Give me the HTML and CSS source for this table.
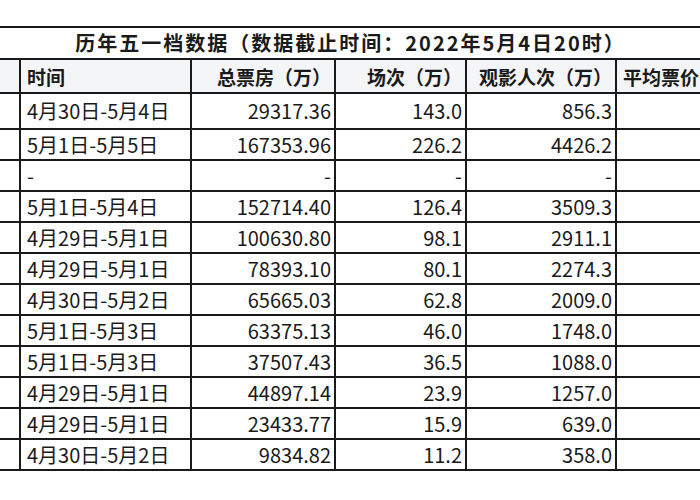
FILE: index.html
```html
<!DOCTYPE html>
<html lang="zh-CN">
<head>
<meta charset="utf-8">
<title>历年五一档数据</title>
<link rel="stylesheet" href="styles.css">
</head>
<body>
<div class="frame">
  <table class="sheet">
    <colgroup>
      <col class="c-idx">
      <col class="c-time">
      <col class="c-box">
      <col class="c-show">
      <col class="c-aud">
      <col class="c-price">
    </colgroup>
    <tr class="title-row">
      <td class="title" colspan="6">历年五一档数据（数据截止时间：2022年5月4日20时）</td>
    </tr>
    <tr class="head-row">
      <th></th>
      <th class="left">时间</th>
      <th>总票房（万）</th>
      <th>场次（万）</th>
      <th>观影人次（万）</th>
      <th class="left">平均票价（元）</th>
    </tr>
    <tr class="first"><td></td><td class="left">4月30日-5月4日</td><td>29317.36</td><td>143.0</td><td>856.3</td><td></td></tr>
    <tr><td></td><td class="left">5月1日-5月5日</td><td>167353.96</td><td>226.2</td><td>4426.2</td><td></td></tr>
    <tr><td></td><td class="left">-</td><td>-</td><td>-</td><td>-</td><td></td></tr>
    <tr><td></td><td class="left">5月1日-5月4日</td><td>152714.40</td><td>126.4</td><td>3509.3</td><td></td></tr>
    <tr><td></td><td class="left">4月29日-5月1日</td><td>100630.80</td><td>98.1</td><td>2911.1</td><td></td></tr>
    <tr><td></td><td class="left">4月29日-5月1日</td><td>78393.10</td><td>80.1</td><td>2274.3</td><td></td></tr>
    <tr><td></td><td class="left">4月30日-5月2日</td><td>65665.03</td><td>62.8</td><td>2009.0</td><td></td></tr>
    <tr><td></td><td class="left">5月1日-5月3日</td><td>63375.13</td><td>46.0</td><td>1748.0</td><td></td></tr>
    <tr><td></td><td class="left">5月1日-5月3日</td><td>37507.43</td><td>36.5</td><td>1088.0</td><td></td></tr>
    <tr><td></td><td class="left">4月29日-5月1日</td><td>44897.14</td><td>23.9</td><td>1257.0</td><td></td></tr>
    <tr><td></td><td class="left">4月29日-5月1日</td><td>23433.77</td><td>15.9</td><td>639.0</td><td></td></tr>
    <tr><td></td><td class="left">4月30日-5月2日</td><td>9834.82</td><td>11.2</td><td>358.0</td><td></td></tr>
  </table>
</div>
</body>
</html>
```
FILE: styles.css
```css
html, body {
  margin: 0;
  padding: 0;
  background: #ffffff;
}

.frame {
  width: 700px;
  height: 500px;
  overflow: hidden;
  padding-top: 26px;
  box-sizing: border-box;
}

.sheet {
  margin-left: -40px;
  width: 776px;
  table-layout: fixed;
  border-collapse: collapse;
  font-family: "Noto Sans CJK SC", "Noto Sans", sans-serif;
  font-size: 20px;
  color: #1a1a1a;
}

.c-idx { width: 59px; }
.c-time { width: 171px; }
.c-box { width: 144px; }
.c-show { width: 131px; }
.c-aud { width: 150px; }
.c-price { width: 121px; }

.sheet td,
.sheet th {
  border: 2px solid #1a1a1a;
  padding: 0 3px 0 6px;
  text-align: right;
  white-space: nowrap;
  overflow: hidden;
  line-height: 1;
  height: 31px;
  box-sizing: border-box;
}

.sheet .left {
  text-align: left;
}

.title-row td {
  height: 32px;
  text-align: center;
  font-weight: 700;
  font-size: 20px;
  letter-spacing: 2px;
}

.head-row th {
  height: 34px;
  background: #f4f5f7;
  font-weight: 700;
  font-size: 19px;
}

.first td {
  height: 36px;
}
```
